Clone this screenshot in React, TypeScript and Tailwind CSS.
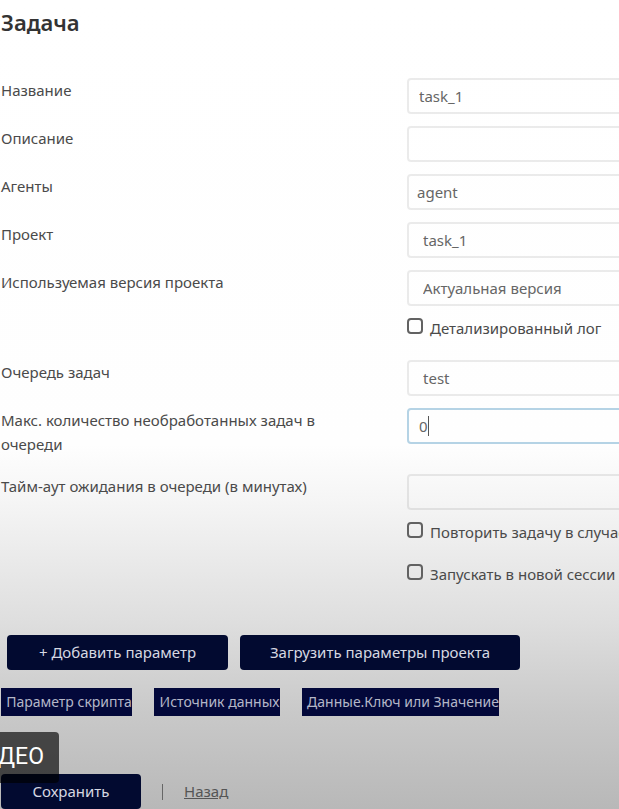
import type { ReactNode } from "react";

const control =
  "block h-9 w-full appearance-none rounded-[4px] border-2 border-black/8 bg-transparent text-[15px] text-[#666] outline-none";

function Row({ id, label, tall, children }: { id: string; label: string; tall?: boolean; children: ReactNode }) {
  return (
    <div className={tall ? "grid min-h-[66px] grid-cols-[407px_1fr]" : "grid min-h-12 grid-cols-[407px_1fr]"}>
      <label htmlFor={id} className="max-w-[360px] pl-px text-[15px] leading-6 text-[#4a4a4a]">
        {label}
      </label>
      <div className="relative">{children}</div>
    </div>
  );
}

function Check({ id, label }: { id: string; label: string }) {
  return (
    <div className="flex h-[42px] items-start gap-[7px] pl-[407px]">
      <input
        id={id}
        type="checkbox"
        className="size-4 shrink-0 appearance-none rounded-[4px] border-2 border-[#626262]"
      />
      <label htmlFor={id} className="whitespace-nowrap text-[15px] leading-5 text-[#4a4a4a]">
        {label}
      </label>
    </div>
  );
}

function Select({ id, value }: { id: string; value: string }) {
  return (
    <select id={id} defaultValue={value} className={`${control} pl-[14px]`}>
      <option value={value}>{value}</option>
    </select>
  );
}

const buttonStyle = "h-[35px] rounded-[4px] bg-[#020a30] text-[15px] text-[#d6d8e2]";

export default function App() {
  return (
    <main className="relative min-h-screen overflow-hidden bg-[linear-gradient(to_bottom,#fff_0%,#fefefe_55%,#f5f5f5_62%,#dedede_77%,#c9c9c9_88%,#b8b8b8_100%)] font-['Noto_Sans',sans-serif]">
      <form onSubmit={(e) => e.preventDefault()}>
        <h1 className="pt-2 pl-px text-[22px] leading-7 font-semibold text-[#333]">Задача</h1>

        <div className="-mr-6 pt-[42px]">
          <Row id="name" label="Название">
            <input id="name" type="text" defaultValue="task_1" className={`${control} pl-[10px]`} />
          </Row>
          <Row id="description" label="Описание">
            <input id="description" type="text" className={`${control} pl-[10px]`} />
          </Row>
          <Row id="agents" label="Агенты">
            <input id="agents" type="text" defaultValue="agent" className={`${control} pl-2`} />
          </Row>
          <Row id="project" label="Проект">
            <Select id="project" value="task_1" />
          </Row>
          <Row id="version" label="Используемая версия проекта">
            <Select id="version" value="Актуальная версия" />
          </Row>
          <Check id="log" label="Детализированный лог" />
          <Row id="queue" label="Очередь задач">
            <Select id="queue" value="test" />
          </Row>
          <Row id="max" label="Макс. количество необработанных задач в очереди" tall>
            <input
              id="max"
              type="text"
              defaultValue="0"
              className="block h-9 w-full rounded-[4px] border-2 border-[#b5d3e5] bg-transparent pl-[10px] text-[15px] text-[#666] outline-none"
            />
            <span className="absolute top-2 left-[21px] h-5 w-px bg-[#555]" />
          </Row>
          <Row id="timeout" label="Тайм-аут ожидания в очереди (в минутах)">
            <input id="timeout" type="text" className={`${control} pl-[10px]`} />
          </Row>
          <Check id="retry" label="Повторить задачу в случае" />
          <Check id="session" label="Запускать в новой сессии" />
        </div>

        <div className="flex gap-3 pt-[29px] pl-[7px]">
          <button type="button" className={`${buttonStyle} w-[221px]`}>
            + Добавить параметр
          </button>
          <button type="button" className={`${buttonStyle} w-[280px]`}>
            Загрузить параметры проекта
          </button>
        </div>

        <table className="mt-[18px] ml-px">
          <thead>
            <tr className="text-[14px] leading-7 whitespace-nowrap text-[#b4b7c8]">
              <th className="p-0 pr-[22px] font-normal">
                <span className="block w-[131px] bg-[#03083a] pl-[5px]">Параметр скрипта</span>
              </th>
              <th className="p-0 pr-[22px] font-normal">
                <span className="block w-[126px] bg-[#03083a] pl-[5px]">Источник данных</span>
              </th>
              <th className="p-0 font-normal">
                <span className="block w-[197px] bg-[#03083a] pl-[5px]">Данные.Ключ или Значение</span>
              </th>
            </tr>
          </thead>
        </table>

        <div className="flex items-center gap-[21px] pt-[58px] pl-px">
          <button type="submit" className={`${buttonStyle} w-[140px]`}>
            Сохранить
          </button>
          <span className="h-4 w-px bg-[#666]" />
          <a href="#back" className="text-[15px] text-[#555] underline">
            Назад
          </a>
        </div>
      </form>

      <div className="absolute bottom-[26px] left-0 flex h-[51px] w-[59px] items-center justify-end rounded-r-[4px] bg-black/65 pr-[15px] font-[Roboto,sans-serif] text-[23px] text-white">
        ДЕО
      </div>
    </main>
  );
}
